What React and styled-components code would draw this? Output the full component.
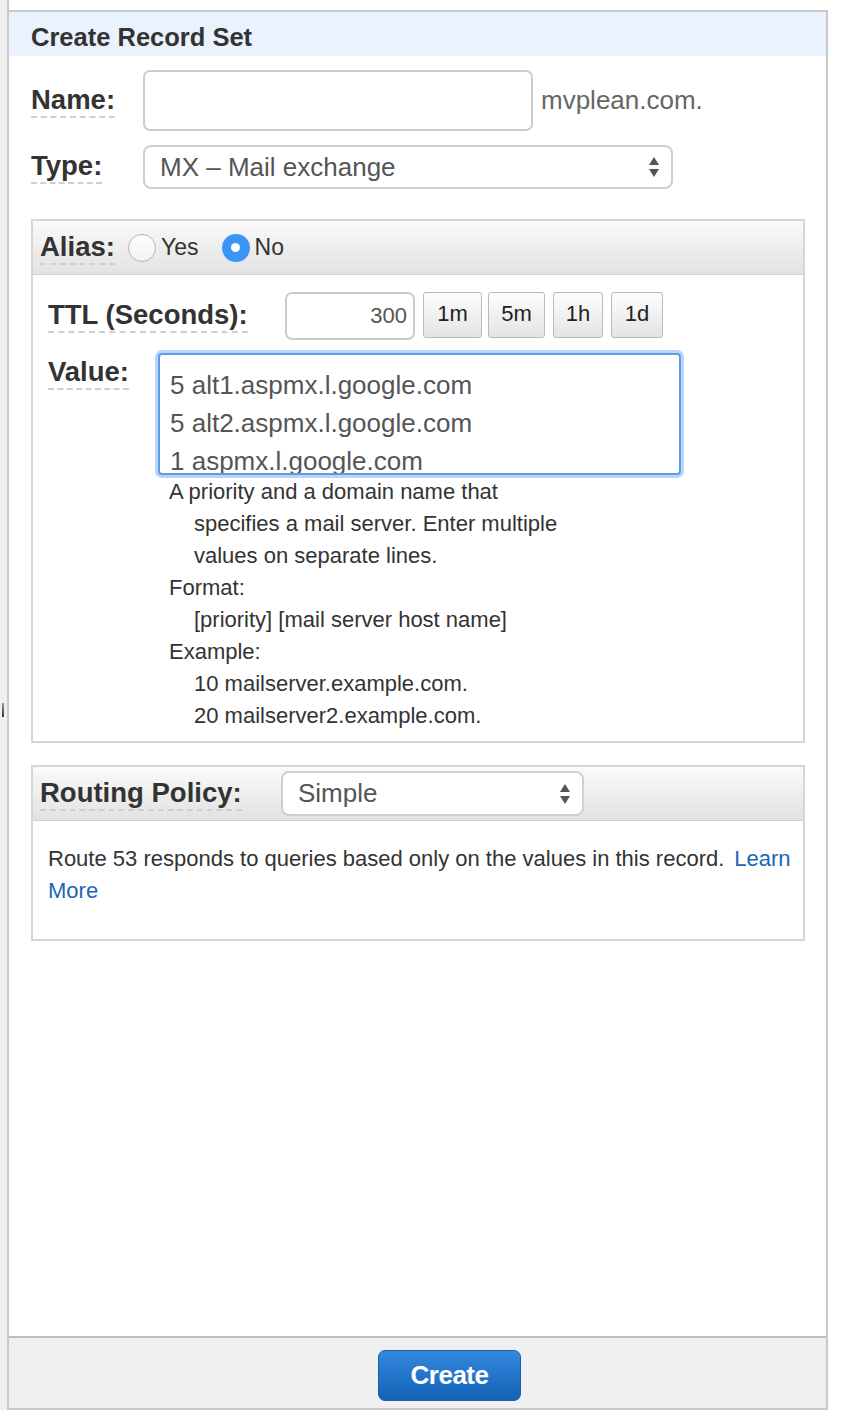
import React from "react";
import styled, { createGlobalStyle } from "styled-components";

const GlobalStyle = createGlobalStyle`
  body {
    margin: 0;
    background: #fff;
    font-family: "Liberation Sans", Arial, sans-serif;
    color: #333;
  }
`;

// whole page
const Page = styled.div`
  display: flex;
  align-items: flex-start;
  height: 1422px;
`;

// grey strip on the left
const Strip = styled.div`
  position: relative;
  width: 7px;
  height: 1410px;
  background: #efefef;
  border-right: 2px solid #c9c9c9;
`;

const Grip = styled.div`
  position: absolute;
  left: 2px;
  top: 703px;
  width: 2px;
  height: 14px;
  background: linear-gradient(#999, #333);
`;

const Panel = styled.div`
  margin-top: 10px;
  width: 819px;
  height: 1400px;
  box-sizing: border-box;
  border: 2px solid #c9c9c9;
  border-left: none;
  display: flex;
  flex-direction: column;
`;

const PanelTitle = styled.div`
  height: 44px;
  display: flex;
  align-items: center;
  padding: 6px 0 0 22px;
  box-sizing: border-box;
  background: #eaf2fd;
  font-size: 25.5px;
  font-weight: bold;
  color: #333;
`;

const PanelBody = styled.div`
  flex: 1;
  padding: 14px 21px 0 22px;
`;

const Row = styled.div`
  display: flex;
  align-items: ${(p) => p.$align || "center"};
  margin-top: ${(p) => p.$top || 0}px;
`;

const LabelCol = styled.div`
  width: ${(p) => p.$w}px;
  flex-shrink: 0;
  margin-top: ${(p) => p.$top || 0}px;
`;

// label with dashed underline
const Label = styled.span`
  display: inline-block;
  font-size: 27.5px;
  font-weight: bold;
  color: #333;
  line-height: 32px;
  border-bottom: 2px dashed #cfcfcf;
`;

const TextInput = styled.div`
  width: ${(p) => p.$w}px;
  height: ${(p) => p.$h}px;
  box-sizing: border-box;
  border: 2px solid #cccccc;
  border-radius: 7px;
  background: #fff;
  display: flex;
  align-items: center;
  justify-content: flex-end;
  padding-right: 6px;
  font-size: 22px;
  color: #555;
`;

const Suffix = styled.span`
  margin-left: 8px;
  font-size: 26px;
  color: #666;
`;

const SelectBox = styled.div`
  width: ${(p) => p.$w}px;
  height: ${(p) => p.$h}px;
  box-sizing: border-box;
  border: 2px solid #cfcfcf;
  border-radius: 8px;
  background: #fff;
  display: flex;
  align-items: center;
  justify-content: space-between;
  padding: 0 11px 0 15px;
  font-size: 26px;
  color: #555;
`;

const Arrows = () => (
  <svg width="12" height="24" viewBox="0 0 12 24">
    <path d="M6 2 L11 10 L1 10 Z" fill="#555" />
    <path d="M6 22 L11 14 L1 14 Z" fill="#555" />
  </svg>
);

const Box = styled.div`
  margin-top: ${(p) => p.$top}px;
  border: 2px solid #d6d6d6;
`;

const BoxHeader = styled.div`
  height: 54px;
  box-sizing: border-box;
  display: flex;
  align-items: center;
  padding-left: 7px;
  background: linear-gradient(#fafafa, #e2e2e2);
  border-bottom: 1px solid #cfcfcf;
`;

const BoxBody = styled.div`
  padding: ${(p) => p.$pad};
`;

const RadioWrap = styled.label`
  display: flex;
  align-items: center;
  margin-left: ${(p) => p.$left}px;
  font-size: 23px;
  color: #333;
`;

const RadioDot = styled.span`
  width: 28px;
  height: 28px;
  box-sizing: border-box;
  border-radius: 50%;
  margin-right: 5px;
  display: flex;
  align-items: center;
  justify-content: center;
  border: ${(p) => (p.$on ? "none" : "1px solid #b5b5b5")};
  background: ${(p) => (p.$on ? "#3a95f6" : "linear-gradient(#fff, #f1f1f1)")};

  &::after {
    content: "";
    display: ${(p) => (p.$on ? "block" : "none")};
    width: 9px;
    height: 9px;
    border-radius: 50%;
    background: #fff;
  }
`;

const TtlButton = styled.button`
  width: ${(p) => p.$w}px;
  height: 46px;
  margin-left: ${(p) => p.$left}px;
  border: 1px solid #b9b9b9;
  border-radius: 3px;
  background: linear-gradient(#fdfdfd, #e4e4e4);
  font-family: "Liberation Sans", Arial, sans-serif;
  font-size: 22px;
  color: #222;
  padding: 0 0 2px;
  align-self: flex-start;
`;

const ValueArea = styled.textarea`
  width: 523px;
  height: 122px;
  box-sizing: border-box;
  border: 2px solid #5d9ce6;
  border-radius: 4px;
  box-shadow: 0 0 0 3px rgba(140, 185, 245, 0.6);
  padding: 11px 10px;
  font-family: "Liberation Sans", Arial, sans-serif;
  font-size: 26px;
  line-height: 38px;
  color: #555;
  resize: none;
  overflow: hidden;
  outline: none;
`;

const Help = styled.div`
  margin: 1px 0 0 121px;
  font-size: 22px;
  line-height: 32px;
  color: #333;
`;

const HelpLine = styled.div`
  padding-left: ${(p) => (p.$indent ? 25 : 0)}px;
`;

const Note = styled.div`
  font-size: 22px;
  line-height: 32px;
  color: #333;
  white-space: nowrap;
`;

const Link = styled.a`
  color: #1a66b5;
  text-decoration: none;
  margin-left: ${(p) => p.$left || 0}px;
`;

const Footer = styled.div`
  height: 72px;
  box-sizing: border-box;
  border-top: 2px solid #bdbdbd;
  background: #efefef;
  display: flex;
  justify-content: center;
  align-items: flex-start;
  padding: 12px 0 0 64px;
`;

const CreateButton = styled.button`
  width: 143px;
  height: 51px;
  border: 1px solid #1b5fa9;
  border-radius: 7px;
  background: linear-gradient(#3289dd, #1462b8);
  color: #fff;
  font-family: "Liberation Sans", Arial, sans-serif;
  font-size: 26px;
  font-weight: bold;
  letter-spacing: -0.5px;
`;

export default function App() {
  return (
    <Page>
      <GlobalStyle />
      <Strip>
        <Grip />
      </Strip>
      <Panel>
        <PanelTitle>Create Record Set</PanelTitle>
        <PanelBody>
          <Row>
            <LabelCol $w={112}>
              <Label>Name:</Label>
            </LabelCol>
            <TextInput $w={390} $h={61} />
            <Suffix>mvplean.com.</Suffix>
          </Row>
          <Row $top={14}>
            <LabelCol $w={112}>
              <Label>Type:</Label>
            </LabelCol>
            <SelectBox $w={530} $h={44}>
              <span>MX – Mail exchange</span>
              <Arrows />
            </SelectBox>
          </Row>

          <Box $top={30}>
            <BoxHeader>
              <LabelCol $w={88}>
                <Label>Alias:</Label>
              </LabelCol>
              <RadioWrap $left={0}>
                <RadioDot />
                Yes
              </RadioWrap>
              <RadioWrap $left={23}>
                <RadioDot $on />
                No
              </RadioWrap>
            </BoxHeader>
            <BoxBody $pad="17px 0 9px 15px">
              <Row>
                <LabelCol $w={237}>
                  <Label>TTL (Seconds):</Label>
                </LabelCol>
                <TextInput $w={130} $h={48}>300</TextInput>
                <TtlButton $w={59} $left={8}>1m</TtlButton>
                <TtlButton $w={57} $left={6}>5m</TtlButton>
                <TtlButton $w={50} $left={8}>1h</TtlButton>
                <TtlButton $w={52} $left={8}>1d</TtlButton>
              </Row>
              <Row $top={13} $align="flex-start">
                <LabelCol $w={110} $top={3}>
                  <Label>Value:</Label>
                </LabelCol>
                <ValueArea
                  readOnly
                  defaultValue={"5 alt1.aspmx.l.google.com\n5 alt2.aspmx.l.google.com\n1 aspmx.l.google.com"}
                />
              </Row>
              <Help>
                <HelpLine>A priority and a domain name that</HelpLine>
                <HelpLine $indent>specifies a mail server. Enter multiple</HelpLine>
                <HelpLine $indent>values on separate lines.</HelpLine>
                <HelpLine>Format:</HelpLine>
                <HelpLine $indent>[priority] [mail server host name]</HelpLine>
                <HelpLine>Example:</HelpLine>
                <HelpLine $indent>10 mailserver.example.com.</HelpLine>
                <HelpLine $indent>20 mailserver2.example.com.</HelpLine>
              </Help>
            </BoxBody>
          </Box>

          <Box $top={22}>
            <BoxHeader>
              <LabelCol $w={241}>
                <Label>Routing Policy:</Label>
              </LabelCol>
              <SelectBox $w={303} $h={45}>
                <span>Simple</span>
                <Arrows />
              </SelectBox>
            </BoxHeader>
            <BoxBody $pad="22px 15px 32px 15px">
              <Note>
                Route 53 responds to queries based only on the values in this record.
                <Link href="#" $left={10}>Learn</Link>
                <br />
                <Link href="#">More</Link>
              </Note>
            </BoxBody>
          </Box>
        </PanelBody>
        <Footer>
          <CreateButton>Create</CreateButton>
        </Footer>
      </Panel>
    </Page>
  );
}
